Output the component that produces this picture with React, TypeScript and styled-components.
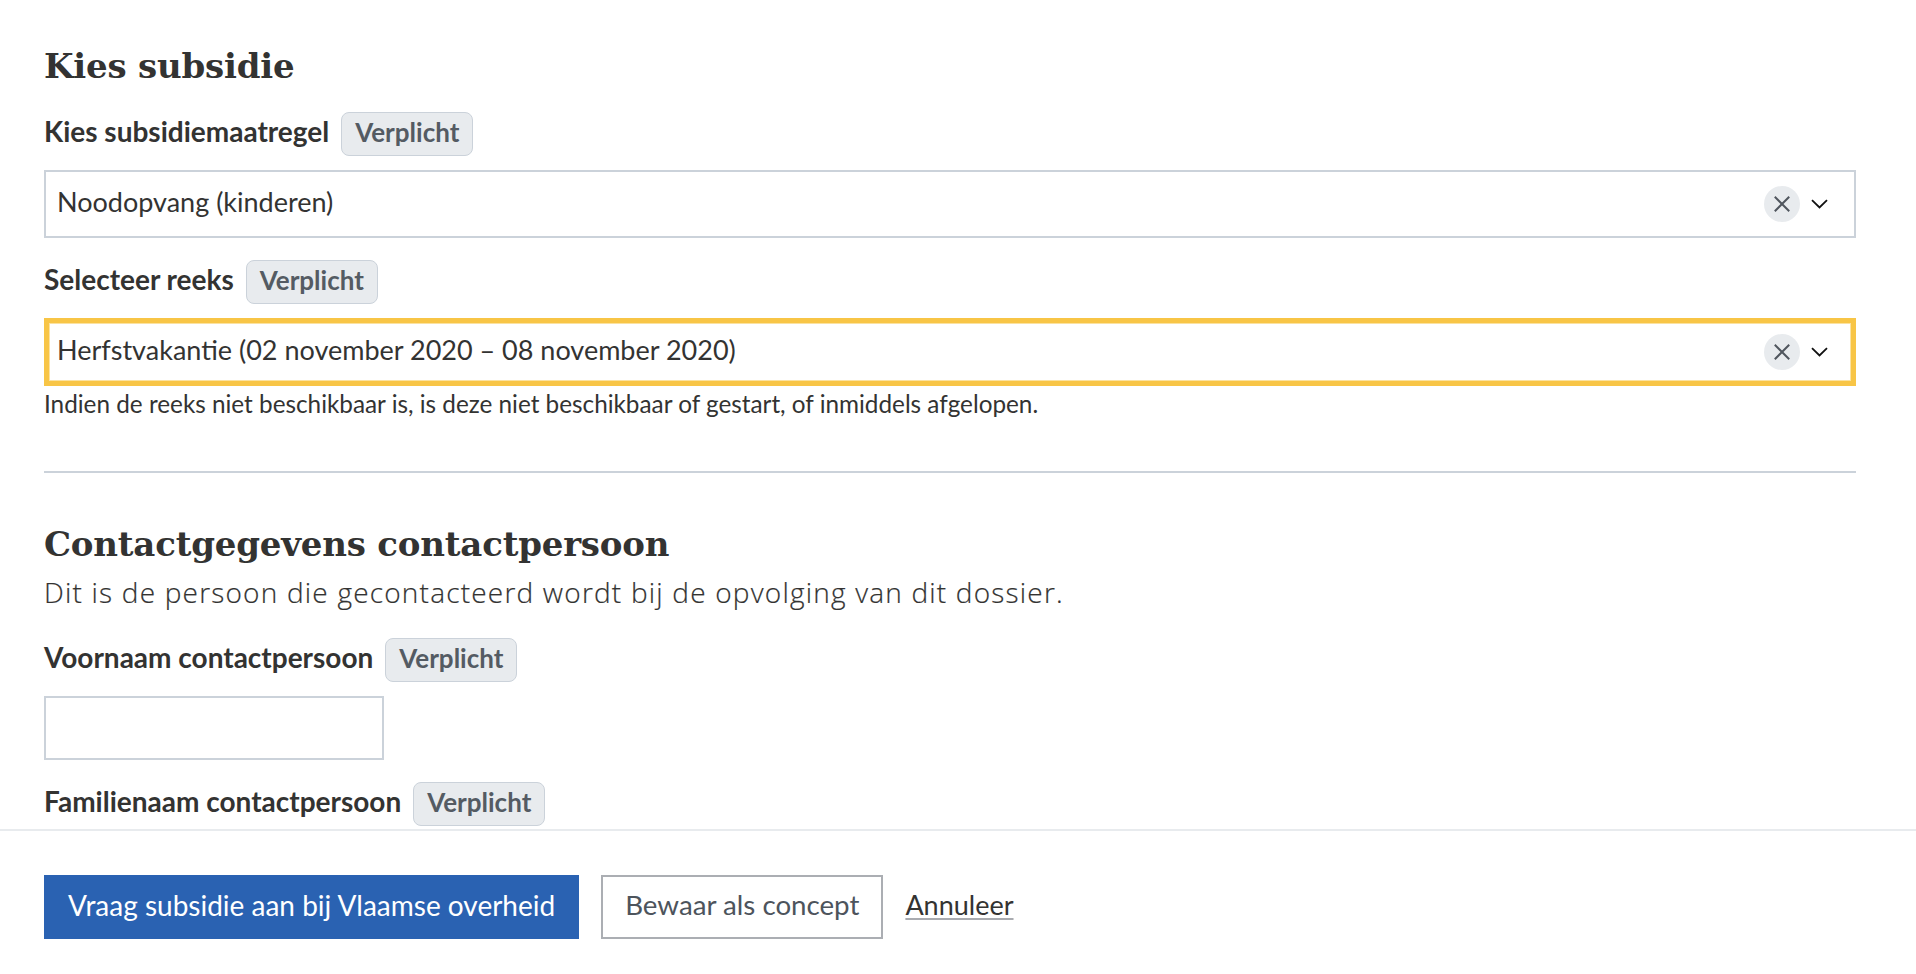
import React from "react";
import styled, { createGlobalStyle } from "styled-components";

const GlobalStyle = createGlobalStyle`
  html, body {
    margin: 0;
    padding: 0;
    background: #ffffff;
  }
  body {
    font-family: "Lato", "Open Sans", sans-serif;
    color: #333332;
  }
  * { box-sizing: border-box; }
`;

const Page = styled.div`
  height: 100vh;
  display: flex;
  flex-direction: column;
  overflow: hidden;
`;

const Content = styled.main`
  flex: 1;
  min-height: 0;
  overflow: hidden;
  padding: 46px 60px 0 44px;
  display: flex;
  flex-direction: column;
`;

const SectionTitle = styled.h2<{ $mt?: number }>`
  margin: ${(p) => p.$mt ?? 0}px 0 0;
  font-family: "DejaVu Serif", "Liberation Serif", serif;
  font-weight: 700;
  font-size: 34px;
  line-height: 40px;
  color: #333332;
  letter-spacing: -0.2px;
`;

const Intro = styled.p`
  margin: 10px 0 0;
  font-family: "Open Sans", "Lato", sans-serif;
  font-weight: 300;
  font-size: 28px;
  line-height: 36px;
  letter-spacing: 1.2px;
  color: #333332;
  -webkit-text-stroke: 0.2px #333332;
`;

const FieldGroup = styled.div<{ $mt: number }>`
  display: flex;
  flex-direction: column;
  align-items: flex-start;
  margin-top: ${(p) => p.$mt}px;
  flex-shrink: 0;
`;

const LabelRow = styled.div`
  display: flex;
  align-items: baseline;
  gap: 12px;
  margin-bottom: 14px;
`;

const Label = styled.label`
  font-family: "Lato", sans-serif;
  font-weight: 700;
  font-size: 28px;
  line-height: 36px;
  color: #333332;
`;

const Badge = styled.span`
  display: inline-block;
  font-family: "Lato", sans-serif;
  font-weight: 700;
  font-size: 26px;
  line-height: 32px;
  padding: 3px 13px 7px;
  border: 1px solid #cbd2da;
  border-radius: 8px;
  background: #e8ebee;
  color: #545b63;
`;

const SelectBox = styled.div<{ $focused?: boolean }>`
  align-self: stretch;
  height: 68px;
  display: flex;
  align-items: center;
  padding: 0 26px 0 11px;
  border: 2px solid ${(p) => (p.$focused ? "#f8c546" : "#cbd2da")};
  box-shadow: ${(p) =>
    p.$focused ? "inset 0 0 0 3px #f8c546, inset 0 0 0 4px #fbe2a0" : "none"};
  background: #ffffff;
`;

const SelectValue = styled.span`
  flex: 1;
  font-family: "Lato", sans-serif;
  font-size: 27px;
  line-height: 60px;
  padding-bottom: 4px;
  color: #333332;
  white-space: nowrap;
`;

const ClearButton = styled.span`
  width: 36px;
  height: 36px;
  border-radius: 50%;
  background: #e8ebee;
  display: flex;
  align-items: center;
  justify-content: center;
  margin-right: 11px;
  flex-shrink: 0;
`;

const ChevronWrap = styled.span`
  display: flex;
  align-items: center;
  width: 17px;
  height: 36px;
`;

const HelpText = styled.p`
  margin: 4px 0 0;
  font-family: "Lato", sans-serif;
  font-size: 24.3px;
  line-height: 28px;
  color: #333332;
`;

const Divider = styled.hr`
  margin: 53px 0 0;
  border: 0;
  height: 2px;
  background: #cbd2da;
  flex-shrink: 0;
`;

const TextInput = styled.input`
  width: 340px;
  height: 64px;
  border: 2px solid #cbd2da;
  padding: 0 11px;
  font-family: "Lato", sans-serif;
  font-size: 27px;
  color: #333332;
  background: #ffffff;
  outline: none;
`;

const Footer = styled.footer`
  flex-shrink: 0;
  border-top: 2px solid #e8ebee;
  padding: 44px 44px 35px;
  display: flex;
  align-items: center;
  gap: 22px;
  background: #ffffff;
`;

const Button = styled.button<{ $variant: "primary" | "secondary" }>`
  height: 64px;
  padding: 0 22px 4px;
  border: 2px solid ${(p) => (p.$variant === "primary" ? "#2a62b2" : "#abaeb3")};
  background: ${(p) => (p.$variant === "primary" ? "#2a62b2" : "#ffffff")};
  color: ${(p) => (p.$variant === "primary" ? "#ffffff" : "#4d545c")};
  font-family: "Lato", sans-serif;
  font-size: ${(p) => (p.$variant === "primary" ? "28px" : "27.7px")};
  line-height: 56px;
  cursor: pointer;
  white-space: nowrap;
`;

const CancelLink = styled.a`
  font-family: "Lato", sans-serif;
  font-size: 27px;
  line-height: 56px;
  padding-bottom: 4px;
  color: #333332;
  text-decoration: underline;
  text-decoration-color: #a9abb0;
  text-decoration-thickness: 2px;
  text-underline-offset: 3px;
  cursor: pointer;
`;

const ClearIcon = () => (
  <svg width="16" height="16" viewBox="0 0 16 16" fill="none">
    <path d="M1.5 1.5L14.5 14.5M14.5 1.5L1.5 14.5" stroke="#50565e" strokeWidth="2" strokeLinecap="square" />
  </svg>
);

const ChevronIcon = () => (
  <svg width="17" height="10" viewBox="0 0 17 10" fill="none">
    <path d="M1 1.2L8.5 8.5L16 1.2" stroke="#111111" strokeWidth="1.8" />
  </svg>
);

const Select = ({ value, focused }: { value: string; focused?: boolean }) => (
  <SelectBox $focused={focused}>
    <SelectValue>{value}</SelectValue>
    <ClearButton>
      <ClearIcon />
    </ClearButton>
    <ChevronWrap>
      <ChevronIcon />
    </ChevronWrap>
  </SelectBox>
);

const FieldLabel = ({ text }: { text: string }) => (
  <LabelRow>
    <Label>{text}</Label>
    <Badge>Verplicht</Badge>
  </LabelRow>
);

export default function App() {
  return (
    <>
      <GlobalStyle />
      <Page>
        <Content>
          <SectionTitle>Kies subsidie</SectionTitle>

          <FieldGroup $mt={26}>
            <FieldLabel text="Kies subsidiemaatregel" />
            <Select value="Noodopvang (kinderen)" />
          </FieldGroup>

          <FieldGroup $mt={22}>
            <FieldLabel text="Selecteer reeks" />
            <Select value="Herfstvakantie (02 november 2020 – 08 november 2020)" focused />
            <HelpText>
              Indien de reeks niet beschikbaar is, is deze niet beschikbaar of gestart, of inmiddels afgelopen.
            </HelpText>
          </FieldGroup>

          <Divider />

          <SectionTitle $mt={51}>Contactgegevens contactpersoon</SectionTitle>
          <Intro>Dit is de persoon die gecontacteerd wordt bij de opvolging van dit dossier.</Intro>

          <FieldGroup $mt={28}>
            <FieldLabel text="Voornaam contactpersoon" />
            <TextInput type="text" />
          </FieldGroup>

          <FieldGroup $mt={22}>
            <FieldLabel text="Familienaam contactpersoon" />
            <TextInput type="text" />
          </FieldGroup>
        </Content>

        <Footer>
          <Button $variant="primary">Vraag subsidie aan bij Vlaamse overheid</Button>
          <Button $variant="secondary">Bewaar als concept</Button>
          <CancelLink>Annuleer</CancelLink>
        </Footer>
      </Page>
    </>
  );
}
